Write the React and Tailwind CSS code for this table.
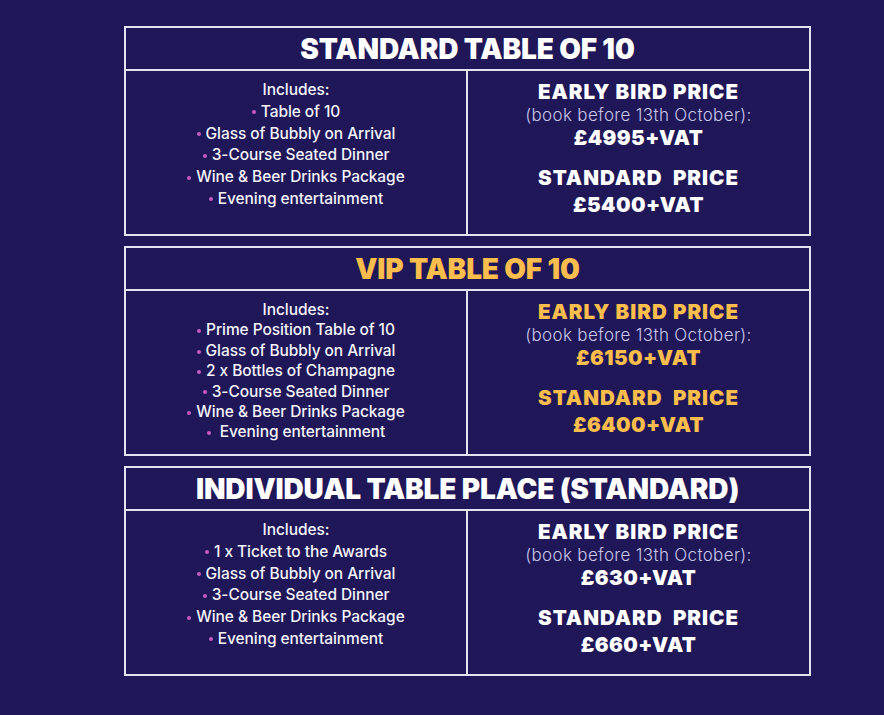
import React from "react";

const packages = [
  {
    title: "STANDARD TABLE OF 10",
    accent: "text-white",
    leading: "leading-[21.8px] pt-[8px]",
    items: [
      "Table of 10",
      "Glass of Bubbly on Arrival",
      "3-Course Seated Dinner",
      "Wine & Beer Drinks Package",
      "Evening entertainment",
    ],
    early: "£4995+VAT",
    standard: "£5400+VAT",
  },
  {
    title: "VIP TABLE OF 10",
    accent: "text-[#fbbd4c]",
    leading: "leading-[20.4px] pt-[9px]",
    items: [
      "Prime Position Table of 10",
      "Glass of Bubbly on Arrival",
      "2 x Bottles of Champagne",
      "3-Course Seated Dinner",
      "Wine & Beer Drinks Package",
      " Evening entertainment",
    ],
    early: "£6150+VAT",
    standard: "£6400+VAT",
  },
  {
    title: "INDIVIDUAL TABLE PLACE (STANDARD)",
    accent: "text-white",
    leading: "leading-[21.8px] pt-[8px]",
    items: [
      "1 x Ticket to the Awards",
      "Glass of Bubbly on Arrival",
      "3-Course Seated Dinner",
      "Wine & Beer Drinks Package",
      "Evening entertainment",
    ],
    early: "£630+VAT",
    standard: "£660+VAT",
  },
];

function PackageBox({ pkg }) {
  return (
    <div className="w-[687px] h-[210px] flex flex-col border-2 border-[#e4e2f2]">
      {/* title row */}
      <div className="h-[43px] shrink-0 flex items-center justify-center border-b-2 border-[#e4e2f2]">
        <h2 className={`text-[28px] font-black tracking-[-0.005em] leading-none ${pkg.accent}`}>
          {pkg.title}
        </h2>
      </div>

      <div className="flex flex-1">
        {/* includes */}
        <div
          className={`w-[342px] shrink-0 border-r-2 border-[#e4e2f2] flex flex-col items-center text-[15.5px] font-medium tracking-[-0.005em] text-[#f4f3fa] ${pkg.leading}`}
        >
          <div>Includes:</div>
          {pkg.items.map((item) => (
            <div key={item} className="flex items-center whitespace-pre">
              <span className="w-[4px] h-[4px] rounded-full bg-[#c85ac4] mr-[5px] mt-[1px]" />
              {item}
            </div>
          ))}
        </div>

        {/* prices */}
        <div className={`flex-1 flex flex-col items-center pt-[9px] ${pkg.accent}`}>
          <div className="text-[20.5px] font-black tracking-[0.05em] leading-[24px]">
            EARLY BIRD PRICE
          </div>
          <div className="text-[17px] font-light text-[#c8c5e8] leading-[22px] tracking-[0.02em]">
            (book before 13th October):
          </div>
          <div className="text-[20.5px] font-black tracking-[0.02em] leading-[24px]">
            {pkg.early}
          </div>
          <div className="mt-[16px] text-[20.5px] font-black tracking-[0.05em] leading-[24px] whitespace-pre">
            STANDARD  PRICE
          </div>
          <div className="mt-[3px] text-[20.5px] font-black tracking-[0.02em] leading-[24px]">
            {pkg.standard}
          </div>
        </div>
      </div>
    </div>
  );
}

export default function App() {
  return (
    <div
      className="w-full min-h-[715px] bg-[#1f1757] pt-[26px] flex flex-col items-start pl-[124px] gap-[10px]"
      style={{ fontFamily: "Inter, 'Noto Sans', sans-serif" }}
    >
      {packages.map((pkg) => (
        <PackageBox key={pkg.title} pkg={pkg} />
      ))}
    </div>
  );
}
